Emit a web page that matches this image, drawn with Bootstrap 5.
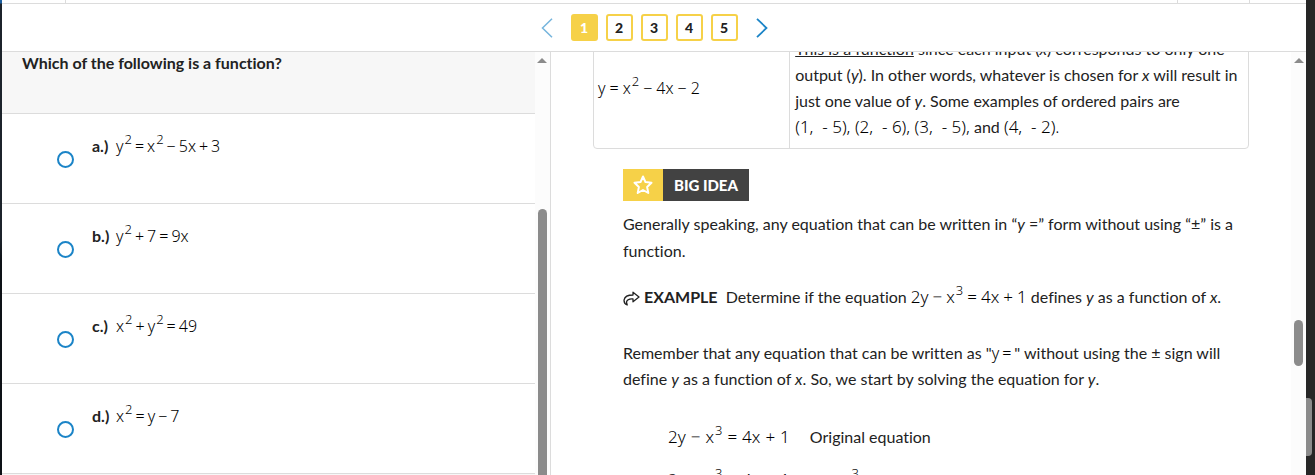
<!DOCTYPE html>
<html lang="en">
<head>
<meta charset="utf-8">
<meta name="viewport" content="width=device-width, initial-scale=1">
<title>Functions – Challenge</title>
<link href="https://cdn.jsdelivr.net/npm/bootstrap@5.3.0/dist/css/bootstrap.min.css" rel="stylesheet">
<style>
  :root { --line: #dcdcdc; --gold: #f6d148; --blue: #1b84c7; }
  body { font: 16px/26px Lato, sans-serif; font-variant-ligatures: none; color: #222; background: #fff; }
  .edge-left { width: 2px; background: linear-gradient(#1c5fa0 0 3px, #1c232b 4px 50%, #0d1116 55%); }
  .edge-right { width: 9px; background: #262626; }
  .edge-thumb { width: 6px; height: 58px; margin-top: auto; margin-bottom: 19px; background: #8b8b8b; border-radius: 0 4px 4px 0; }
  .tabs-row { height: 4px; border-bottom: 1px solid var(--line); }
  .tabs-row span { border-right: 1px solid var(--line); }
  .tab-first { width: 64px; }
  .tab-small { width: 72px; }
  .tab-last { width: 56px; }
  .pager { height: 48px; border-bottom: 1px solid var(--line); }
  .pager button { background: #fff; padding: 0; }
  .pager .page-no { width: 27px; height: 27px; border: 2px solid var(--gold); border-radius: 3px; font: 900 14px/22px Lato, sans-serif; color: #222; }
  .pager .page-no.current { background: var(--gold); color: #fff; }
  .pager .step { width: 12px; height: 22px; border: 0; line-height: 0; }
  .pager .step:first-child { margin-right: 10px; }
  .pager .step:last-child { margin-left: 10px; }
  .pager .step:disabled { opacity: .6; }
  .quiz-pane { width: 42.1%; border-right: 1px solid var(--line); }
  .track { width: 15px; background: #fcfcfc; padding-top: 6px; }
  .arrow-up { border: 5px solid transparent; border-top: 0; border-bottom: 5px solid #8b8b8b; }
  .thumb { width: 9px; background: #8b8b8b; border-radius: 5px; }
  .thumb-quiz { margin-top: 146px; flex: 1 0 auto; border-radius: 5px 5px 0 0; }
  .thumb-lesson { margin-top: 257px; height: 46px; }
  .question { height: 62px; padding-left: 20px; line-height: 22px; font-weight: 700; background: #f7f7f7; border-bottom: 1px solid var(--line); }
  .choice { height: 90px; padding: 19px 0 0 55px; border-bottom: 1px solid var(--line); }
  .choice input { appearance: none; width: 17px; height: 17px; margin: 18px 18px 0 0; border: 2px solid var(--blue); border-radius: 50%; background: #fff; }
  .choice input:checked { background: var(--blue); box-shadow: inset 0 0 0 2px #fff; }
  .choice b { width: 24px; }
  .question-end { background: #f7f7f7; }
  .eq { font-family: "Noto Sans", sans-serif; font-weight: 300; line-height: 20px; color: #000; white-space: nowrap; }
  .choice .eq { line-height: 26px; }
  .eq i { font-style: normal; margin: 0 3px; }
  .eq sup { font-size: 13px; line-height: 0; top: -8px; vertical-align: baseline; margin-left: 1px; }
  .eq.wide { font-size: 17px; }
  .eq.wide i, .sheet .eq i { margin: 0 4px; }
  .lesson { padding: 0 42px; }
  .sheet { margin-top: -25px; border: 1px solid var(--line); border-radius: 4px; border-collapse: separate; border-spacing: 0; }
  .sheet td { padding: 8px 4px; vertical-align: middle; }
  .sheet td:first-child { width: 30%; border-right: 1px solid var(--line); }
  .sheet td:last-child { padding-left: 5px; }
  .body-copy { padding: 20px 12px 0 30px; }
  .idea { height: 32px; font-weight: 900; font-size: 15px; color: #fff; }
  .idea-icon { width: 40px; background: var(--gold); }
  .idea-name { padding: 0 11px; background: #424242; }
  .general { margin: 9px 0 20px; line-height: 27px; }
  .remember { margin: 30px 0 32px; }
  .steps { margin-left: 45px; }
  .steps td { height: 43px; padding: 0 20px 0 0; vertical-align: top; }
  .steps .eq.wide i { margin: 0 5px; }
</style>
</head>
<body class="d-flex vh-100 overflow-hidden">
<div class="edge-left flex-shrink-0"></div>
<div class="d-flex flex-column flex-grow-1 overflow-hidden">
  <div class="tabs-row d-flex flex-shrink-0"><span class="tab-first"></span><span class="flex-grow-1"></span><span class="tab-small"></span><div class="tab-last"></div></div>
  <nav class="pager d-flex justify-content-center align-items-center gap-2 flex-shrink-0" aria-label="Questions">
    <button class="step" type="button" disabled aria-label="Previous"><svg width="12" height="20" viewBox="0 0 12 20" fill="none" stroke="#1b84c7" stroke-width="1.5"><path d="M11 .8 1.5 10 11 19.2"/></svg></button>
    <button class="page-no current" type="button" aria-current="page">1</button>
    <button class="page-no" type="button">2</button>
    <button class="page-no" type="button">3</button>
    <button class="page-no" type="button">4</button>
    <button class="page-no" type="button">5</button>
    <button class="step" type="button" aria-label="Next"><svg width="12" height="20" viewBox="0 0 12 20" fill="none" stroke="#1b84c7" stroke-width="1.8"><path d="M1 .8 10.5 10 1 19.2"/></svg></button>
  </nav>
  <main class="d-flex flex-grow-1 overflow-hidden">
    <section class="quiz-pane d-flex flex-shrink-0">
      <form class="flex-grow-1 d-flex flex-column">
        <div class="question flex-shrink-0">Which of the following is a function?</div>
        <div class="choice d-flex align-items-start flex-shrink-0"><input type="radio" name="answer" id="a"><label class="d-flex" for="a"><b>a.)</b><span class="eq">y<sup>2</sup><i>=</i>x<sup>2</sup><i>−</i>5x<i>+</i>3</span></label></div>
        <div class="choice d-flex align-items-start flex-shrink-0"><input type="radio" name="answer" id="b"><label class="d-flex" for="b"><b>b.)</b><span class="eq">y<sup>2</sup><i>+</i>7<i>=</i>9x</span></label></div>
        <div class="choice d-flex align-items-start flex-shrink-0"><input type="radio" name="answer" id="c"><label class="d-flex" for="c"><b>c.)</b><span class="eq">x<sup>2</sup><i>+</i>y<sup>2</sup><i>=</i>49</span></label></div>
        <div class="choice d-flex align-items-start flex-shrink-0"><input type="radio" name="answer" id="d"><label class="d-flex" for="d"><b>d.)</b><span class="eq">x<sup>2</sup><i>=</i>y<i>−</i>7</span></label></div>
        <div class="question-end flex-grow-1"></div>
      </form>
      <div class="track d-flex flex-column align-items-center"><div class="arrow-up"></div><div class="thumb thumb-quiz"></div></div>
    </section>
    <section class="lesson flex-grow-1">
      <table class="sheet w-100">
        <tbody><tr>
          <td><span class="eq">y<i>=</i>x<sup>2</sup><i>−</i>4x<i>−</i>2</span></td>
          <td><u>This is a function</u> since each input (<em>x</em>) corresponds to only one output (<em>y</em>). In other words, whatever is chosen for <em>x</em> will result in just one value of <em>y</em>. Some examples of ordered pairs are<br><span class="eq wide">(1, &nbsp;- 5), (2, &nbsp;- 6), (3, &nbsp;- 5),</span> and <span class="eq wide">(4, &nbsp;- 2).</span></td>
        </tr></tbody>
      </table>
      <div class="body-copy">
        <div class="idea d-flex align-items-stretch">
          <span class="idea-icon d-flex align-items-center justify-content-center"><svg width="20" height="20" viewBox="0 0 20 20" fill="none" stroke="#fff" stroke-width="2" stroke-linejoin="round"><path d="m10 1.500 2.500 5.600 6 .7-4.400 4.100 1.200 6.100L10 15l-5.300 3 1.200-6.100L1.500 7.800l6-.7z"/></svg></span>
          <span class="idea-name d-flex align-items-center">BIG IDEA</span>
        </div>
        <p class="general">Generally speaking, any equation that can be written in “<em>y</em> =” form without using “±” is a function.</p>
        <p class="mb-0"><svg width="17" height="15" viewBox="0 0 17 15" fill="none" stroke="#222" stroke-width="1.300" stroke-linejoin="round" class="me-1"><path d="M10 1.200 16 6l-6 4.800V8C6 7.700 4 9 3.500 11.200l.7 2.800C2 13 .8 11 1.100 8.800 1.700 5.500 5 4 10 4z"/></svg><b class="me-1">EXAMPLE</b> Determine if the equation <span class="eq wide">2y<i>−</i>x<sup>3</sup><i>=</i>4x<i>+</i>1</span> defines <em>y</em> as a function of <em>x</em>.</p>
        <p class="remember">Remember that any equation that can be written as "<span class="eq">y<i>=</i></span>" without using the ± sign will define <em>y</em> as a function of <em>x</em>. So, we start by solving the equation for <em>y</em>.</p>
        <table class="steps">
          <tbody>
            <tr><td><span class="eq wide">2y<i>−</i>x<sup>3</sup><i>=</i>4x<i>+</i>1</span></td><td>Original equation</td></tr>
            <tr><td><span class="eq wide">2y<i>−</i>x<sup>3</sup><i>=</i>4x<i>+</i>1</span></td><td>Add <span class="eq">x<sup>3</sup></span></td></tr>
          </tbody>
        </table>
      </div>
    </section>
    <div class="track d-flex flex-column align-items-center flex-shrink-0"><div class="arrow-up"></div><div class="thumb thumb-lesson"></div></div>
  </main>
</div>
<div class="edge-right d-flex flex-column flex-shrink-0"><div class="edge-thumb"></div></div>
<script src="https://cdn.jsdelivr.net/npm/bootstrap@5.3.0/dist/js/bootstrap.bundle.min.js"></script>
</body>
</html>
